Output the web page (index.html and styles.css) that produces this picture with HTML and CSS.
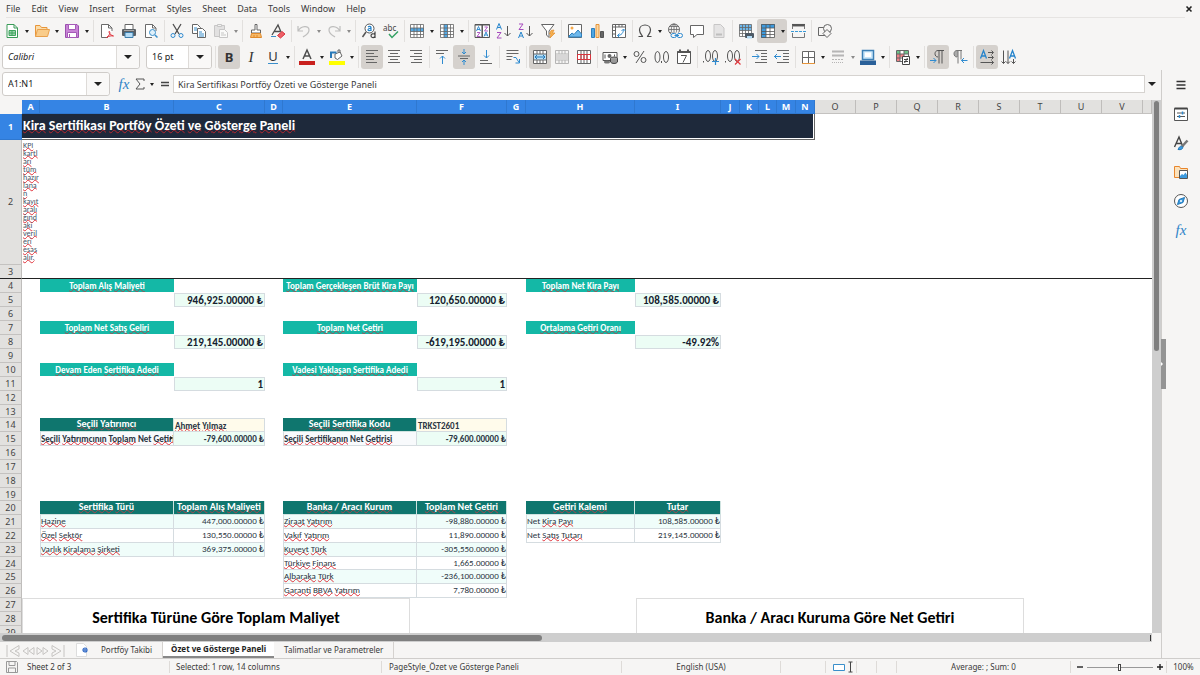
FILE: index.html
```html
<!DOCTYPE html>
<html lang="tr">
<head>
<meta charset="utf-8">
<title>Kira Sertifikası Portföy Özeti</title>
<link rel="stylesheet" href="styles.css">
</head>
<body>
<div class="app">
<header class="menubar">
<nav class="menus" aria-label="Menu"><button>File</button><button>Edit</button><button>View</button><button>Insert</button><button>Format</button><button>Styles</button><button>Sheet</button><button>Data</button><button>Tools</button><button>Window</button><button>Help</button></nav>
<button class="close" aria-label="Close document"><svg viewBox="0 0 8 8"><path d="M1.5 1.5l5 5M6.500 1.500l-5 5" stroke="#222" stroke-width="1.600"/></svg></button>
</header>

<div class="toolbar" role="toolbar" aria-label="Standard">
<button class="tb" aria-label="New"><svg viewBox="0 0 16 16"><path d="M3 1.500h7l3.500 3.500v9.500H3z" fill="#fff" stroke="#3a9b58"/><path d="M10 1.500V5h3.500" stroke="#3a9b58"/><path d="M5 7.500h6.500v5H5zM5 10h6.500M8 7.500v5" fill="#9bd3ac" stroke="#3fa45e"/></svg></button><button class="drop" aria-label="New options"></button>
<button class="tb" aria-label="Open"><svg viewBox="0 0 16 16"><path d="M1.500 13.500V2.500h4.500l1.500 2h5.500v2" fill="#fbdca9" stroke="#e8963a"/><path d="M1.500 13.500l2-7h12l-2 7z" fill="#f9cc8a" stroke="#e8a04c"/></svg></button><button class="drop" aria-label="Open options"></button>
<button class="tb" aria-label="Save"><svg viewBox="0 0 16 16"><path d="M1.500 1.500h11.500l1.500 1.500v11.500h-13z" fill="#c884d6" stroke="#9a4fae"/><path d="M4.500 1.500h7v5h-7zM3.500 9.500h9v5h-9z" fill="#fff" stroke="#a65bb8"/><path d="M5.500 11v3.500" stroke="#a65bb8"/></svg></button><button class="drop" aria-label="Save options"></button>
<i class="sep wide"></i>
<button class="tb" aria-label="Export as PDF"><svg viewBox="0 0 16 16"><path d="M9 14.500H2.500v-13h7l3.500 3.500v3" fill="#fff" stroke="#6b6b6b"/><path d="M9.500 1.500V5H13" stroke="#6b6b6b"/><path d="M7.500 14.500c3-2 4-5 3-6s-1 3 4 4.500c-2-.5-5 0-7 1.500z" stroke="#e0323c"/></svg></button>
<button class="tb" aria-label="Print"><svg viewBox="0 0 16 16"><path d="M4 6V1.500h8V6" fill="#fff" stroke="#666"/><rect x="1" y="6" width="14" height="7" rx="1" fill="#5b6065"/><path d="M4 9.500h8v5H4z" fill="#b5dcf6" stroke="#3d7eac"/><path d="M3 7.500h10" stroke="#aaa"/></svg></button>
<button class="tb" aria-label="Print preview"><svg viewBox="0 0 16 16"><path d="M9 14.500H2.500v-13h7l3.500 3.500v3" fill="#fff" stroke="#6b6b6b"/><path d="M9.500 1.500V5H13" stroke="#6b6b6b"/><circle cx="9.500" cy="9.500" r="3" fill="#dff0fa" stroke="#3a8fcb"/><path d="M12 12l2.500 2.500" stroke="#3a8fcb" stroke-width="1.500"/></svg></button>
<i class="sep"></i>
<button class="tb" aria-label="Cut"><svg viewBox="0 0 16 16"><path d="M4 1l6 10M12 1L6 11" stroke="#4f4f4f" stroke-width="1.300"/><circle cx="4" cy="12.500" r="2" stroke="#2f8bd0"/><circle cx="12" cy="12.500" r="2" stroke="#2f8bd0"/></svg></button>
<button class="tb" aria-label="Copy"><svg viewBox="0 0 16 16"><path d="M1.500 1.500h5l3 3v6h-8z" fill="#fff" stroke="#666"/><path d="M6.500 5.500h5l3 3v6h-8z" fill="#fff" stroke="#666"/><path d="M3 5h3M3 7h3M8 9h3M8 11h5M8 13h5" stroke="#3a8fcb"/></svg></button>
<button class="tb dim" aria-label="Paste"><svg viewBox="0 0 16 16"><path d="M1.500 2.500h10v11h-10z" fill="#cfcfcf" stroke="#999"/><path d="M4.500 1.500h4v2h-4z" fill="#eee" stroke="#999"/><path d="M6.500 6.500h5l3 3v5h-8z" fill="#fff" stroke="#999"/><path d="M8 10h3M8 12h5" stroke="#999"/></svg></button><button class="drop dim" aria-label="Paste options"></button>
<i class="sep wide"></i>
<button class="tb" aria-label="Clone formatting"><svg viewBox="0 0 16 16"><path d="M7 1.500h2V7h3.500v3h-9V7H7z" fill="#fff" stroke="#666"/><path d="M3.500 10.500h9l1 4h-11z" fill="#f7b968" stroke="#e08a2c"/><path d="M6 12v2M9 12v2" stroke="#e08a2c"/></svg></button>
<button class="tb" aria-label="Clear formatting"><svg viewBox="0 0 16 16"><path d="M2 12L8 2l3 7M4.500 8.500H10" stroke="#4d4d4d" stroke-width="1.300"/><path d="M1 13.500h5" stroke="#3a8fcb"/><path d="M7.500 12.500l4.500-4 3 2.500-4.500 4z" fill="#ef6168" stroke="#d9343f"/></svg></button>
<i class="sep"></i>
<button class="tb dim" aria-label="Undo"><svg viewBox="0 0 16 16"><path d="M2 3v5h5M2.500 7.500C5 3 13 2 13 7c0 4-3 5-6 7" stroke="#888" stroke-width="1.200"/></svg></button><button class="drop dim" aria-label="Undo list"></button>
<button class="tb dim" aria-label="Redo"><svg viewBox="0 0 16 16"><path d="M14 3v5H9M13.500 7.500C11 3 3 2 3 7c0 4 3 5 6 7" stroke="#888" stroke-width="1.200"/></svg></button><button class="drop dim" aria-label="Redo list"></button>
<i class="sep wide"></i>
<button class="tb" aria-label="Find and replace"><svg viewBox="0 0 16 16"><circle cx="8.500" cy="5.500" r="4.500" fill="#fff" stroke="#555"/><path d="M5 9l-3.500 5" stroke="#555" stroke-width="1.500"/><path d="M7 4c1-1 3-.8 3 .5V8M10 5.500C8 5.300 7 5.800 7 6.700s1.500 1.500 3 .3" stroke="#2584cc" stroke-width="1.200"/><path d="M14 8.500V15M14 11.500c-2-1.500-4-.5-4 1.300s2.500 2.500 4 .7" stroke="#444" stroke-width="1.200"/></svg></button>
<button class="tb" aria-label="Spelling"><svg viewBox="0 0 16 16"><text x="0" y="8" font-size="8" fill="#444">abc</text><path d="M6 11l3 3.500L15 8.500" stroke="#35a265" stroke-width="1.500"/></svg></button>
<i class="sep"></i>
<button class="tb" aria-label="Row"><svg viewBox="0 0 16 16"><path d="M1.500 1.500h13v13h-13z" fill="#fff"/><path d="M1 5h14v3.500H1z" fill="#54a9e4"/><path d="M1.500 1.500h13v13h-13zM1.500 5h13M1.500 8.500h13M1.500 11.500h13M5 1.500v13M8 1.500v13M11.500 1.500v13" stroke="#666" stroke-width=".8"/></svg></button><button class="drop" aria-label="Row options"></button>
<button class="tb" aria-label="Column"><svg viewBox="0 0 16 16"><path d="M1.500 1.500h13v13h-13z" fill="#fff"/><path d="M5 1h3.500v14H5z" fill="#54a9e4"/><path d="M1.500 1.500h13v13h-13zM1.500 5h13M1.500 8.500h13M1.500 11.500h13M5 1.500v13M8.500 1.500v13M11.500 1.500v13" stroke="#666" stroke-width=".8"/></svg></button><button class="drop" aria-label="Column options"></button>
<i class="sep wide"></i>
<button class="tb" aria-label="Sort"><svg viewBox="0 0 16 16"><path d="M1 1.500h14.500v13H1z" fill="#fff" stroke="#555"/><path d="M1 1.800h14.500M8.200 1v13.500" stroke="#555" stroke-width="1.500"/><path d="M2.500 8l2-4.500 2 4.500M3 6.500h3M10 13.500L12 9l2 4.500M10.500 12h3" stroke="#2584cc" stroke-width=".9"/><path d="M3 9.500h3l-3 4h3.500M10.500 4h3l-3 4H14" stroke="#a64bbd" stroke-width=".9"/></svg></button>
<button class="tb" aria-label="Sort ascending"><svg viewBox="0 0 16 16"><path d="M.5 6.500L3 .5l2.500 6M1.500 4.500h3" stroke="#2584cc"/><path d="M1 9.500h4l-4 5.500h4.500" stroke="#a64bbd"/><path d="M11.500 3v10M8.500 10l3 3 3-3" stroke="#555"/></svg></button>
<button class="tb" aria-label="Sort descending"><svg viewBox="0 0 16 16"><path d="M1 1h4L1 6.500h4.500" stroke="#a64bbd"/><path d="M.5 15L3 9l2.500 6M1.500 13h3" stroke="#2584cc"/><path d="M11.500 3v10M8.500 10l3 3 3-3" stroke="#555"/></svg></button>
<button class="tb" aria-label="AutoFilter"><svg viewBox="0 0 16 16"><path d="M1.500 1.500h12.500L9 8v6.500L6.500 12V8z" fill="#fff" stroke="#666"/><path d="M11 7.500l3-.5-1.500 3H15l-5 5 1-4H9.500z" fill="#f6b04f" stroke="#e28c2b" stroke-width=".7"/></svg></button>
<i class="sep wide"></i>
<button class="tb" aria-label="Image"><svg viewBox="0 0 16 16"><path d="M1.500 1.500h13v13h-13z" fill="#fff" stroke="#666"/><circle cx="5" cy="5" r="1.500" fill="#f6a94b"/><path d="M2 13l3-3 2 1.500L11 7l3.500 4v3H2z" fill="#6db8ec" stroke="#2d80bf"/></svg></button>
<button class="tb" aria-label="Chart"><svg viewBox="0 0 16 16"><path d="M2.500 5.500h3v9h-3z" fill="#4fa6e2" stroke="#2d80bf"/><path d="M7 1.500h3v13H7z" fill="#fbd7a2" stroke="#e6953b"/><path d="M11.500 8.500h3v6h-3z" fill="#666" stroke="#555"/></svg></button>
<button class="tb" aria-label="Pivot table"><svg viewBox="0 0 16 16"><path d="M1.500 1.500h13v13h-13z" fill="#fff" stroke="#666"/><path d="M1.500 4h13M4.500 1.500v13M8 1.500V4M11 1.500V4M1.500 7.500h3M1.500 11h3" stroke="#666"/><path d="M6.500 12.500c4 0 6-3 6-6M10.500 8l2-2 2 2M8.500 10.500l-2 2 2 2" stroke="#2f8bd0"/></svg></button>
<i class="sep"></i>
<button class="tb" aria-label="Special character"><svg viewBox="0 0 16 16"><path d="M1.500 13.500h4c0-1-3-3-3-6.500C2.500 4 5 2 8 2s5.500 2 5.500 5c0 3.500-3 5.500-3 6.500h4" stroke="#4d4d4d" stroke-width="1.200"/></svg></button><button class="drop" aria-label="Recent characters"></button>
<button class="tb" aria-label="Hyperlink"><svg viewBox="0 0 16 16"><circle cx="7" cy="6.500" r="5.500" stroke="#666"/><path d="M1.500 6.500h11M7 1v10M2.500 3.500h9M2.500 9.500h6" stroke="#666" stroke-width=".8"/><ellipse cx="7" cy="6.500" rx="2.700" ry="5.500" stroke="#666" stroke-width=".8"/><path d="M4 9.500h12V16H4z" fill="#f6f5f4"/><rect x="4" y="10.500" width="5.500" height="4" rx="2" stroke="#2f8bd0"/><rect x="10" y="10.500" width="5.500" height="4" rx="2" stroke="#2f8bd0"/><path d="M7.500 12.500h4.500" stroke="#2f8bd0"/></svg></button>
<button class="tb" aria-label="Comment"><svg viewBox="0 0 16 16"><path d="M1.500 2.500h13v9H8l-3.500 3v-3h-3z" fill="#fff" stroke="#666"/></svg></button>
<button class="tb dim" aria-label="Headers and footers"><svg viewBox="0 0 16 16"><path d="M3 1.500h6.500l3.500 3.500v9.500H3z" fill="#d5d5d5" stroke="#999"/><path d="M5 11.500h6" stroke="#888" stroke-width="2"/></svg></button>
<i class="sep wide"></i>
<button class="tb" aria-label="Print area"><svg viewBox="0 0 16 16"><path d="M1.500 1.500h12v13h-12z" fill="#fff"/><path d="M1.500 1.500h12v6h-12z" fill="#6db8ec"/><path d="M1.500 1.500h12v12h-12zM1.500 4.500h12M1.500 7.500h12M1.500 10.500h12M4.500 1.500v12M7.500 1.500v12M10.500 1.500v12" stroke="#666" stroke-width=".8"/><rect x="7" y="10" width="9" height="5" rx="1" fill="#4d5a66"/><path d="M9 13h5v2.500H9z" fill="#b5dcf6"/></svg></button>
<span class="pair on"><button class="tb" aria-label="Freeze rows and columns"><svg viewBox="0 0 16 16"><path d="M1.500 1.500h13v13h-13z" fill="#fff"/><path d="M1 1h5v14H1zM1 1h14v4H1z" fill="#3d9ade"/><path d="M1.500 1.500h13v13h-13zM1.500 5h13M1.500 8.500h13M1.500 11.500h13M6 1.500v13M10 1.500v13" stroke="#555" stroke-width=".8"/></svg></button><button class="drop" aria-label="Freeze options"></button></span>
<button class="tb" aria-label="Split window"><svg viewBox="0 0 16 16"><path d="M2 2.200h13" stroke="#555" stroke-width="2.500"/><path d="M2.500 6V2.500M14.500 6V2.500M2.500 10v4.500h12V10" stroke="#777"/><path d="M1 8.500h3M5 8.500h3M9 8.500h3M13 8.500h3" stroke="#3a9bd8"/></svg></button>
<i class="sep wide"></i>
<button class="tb" aria-label="Show draw functions"><svg viewBox="0 0 16 16"><path d="M1.500 4.500h7v8h-7z" fill="#f6f5f4" stroke="#666"/><circle cx="10.500" cy="5.500" r="4" fill="#f6f5f4" stroke="#666"/><path d="M10 6.500l4 4-4 4-4-4z" fill="#f6f5f4" stroke="#666"/></svg></button>
</div>

<div class="toolbar" role="toolbar" aria-label="Formatting">
<span class="combo font-name"><input type="text" value="Calibri" aria-label="Font name"><button aria-label="Font list"></button></span>
<span class="combo font-size"><input type="text" value="16 pt" aria-label="Font size"><button aria-label="Size list"></button></span>
<i class="sep wide"></i>
<button class="tb on bold" aria-label="Bold">B</button>
<button class="tb ital" aria-label="Italic">I</button>
<button class="tb under" aria-label="Underline"><span>U</span></button><button class="drop" aria-label="Underline options"></button>
<i class="sep"></i>
<button class="tb" aria-label="Font color"><svg viewBox="0 0 16 16"><path d="M4 10L8 1l4 9M5.500 7h5" stroke="#4d4d4d" stroke-width="1.500"/><path d="M0 12h16v4H0z" fill="#c9211e"/></svg></button><button class="drop" aria-label="Font color options"></button>
<button class="tb" aria-label="Highlighting"><svg viewBox="0 0 16 16"><path d="M6 5l5-2 2 4-4.500 3.500L6 9z" fill="#fff" stroke="#666"/><path d="M9 3V1h2v3" stroke="#666"/><path d="M2 9V3.500h5.500" stroke="#2a7ab9" stroke-width="2"/><path d="M0 12h16v4H0z" fill="#ff0"/></svg></button><button class="drop" aria-label="Highlighting options"></button>
<i class="sep wide"></i>
<button class="tb on" aria-label="Align left"><svg viewBox="0 0 16 16"><path d="M2 1.500h12M2 4.500h8M2 7.500h12M2 10.500h8M2 13.500h11" stroke="#666"/></svg></button>
<button class="tb" aria-label="Align center"><svg viewBox="0 0 16 16"><path d="M2 1.500h12M4 4.500h8M2 7.500h12M4 10.500h8M2 13.500h12" stroke="#666"/></svg></button>
<button class="tb" aria-label="Align right"><svg viewBox="0 0 16 16"><path d="M2 1.500h12M6 4.500h8M2 7.500h12M6 10.500h8M3 13.500h11" stroke="#666"/></svg></button>
<i class="sep"></i>
<button class="tb" aria-label="Align top"><svg viewBox="0 0 16 16"><path d="M2 1.500h12M2 4.500h8" stroke="#666"/><path d="M8.500 15V7M6 9.500L8.500 7l2.500 2.500" stroke="#2f8bd0"/></svg></button>
<button class="tb on" aria-label="Center vertically"><svg viewBox="0 0 16 16"><path d="M2 7h12M4 9.500h8" stroke="#666"/><path d="M8 0v5M6 3l2 2 2-2M8 16v-5M6 13l2-2 2 2" stroke="#2f8bd0"/></svg></button>
<button class="tb" aria-label="Align bottom"><svg viewBox="0 0 16 16"><path d="M2 11.500h8M2 14.500h12" stroke="#666"/><path d="M8.500 1v8M6 6.500L8.500 9 11 6.500" stroke="#2f8bd0"/></svg></button>
<i class="sep wide"></i>
<button class="tb" aria-label="Wrap text"><svg viewBox="0 0 16 16"><path d="M1.500 1.500h12M1.500 4.500h12M1.500 7.500h6M1.500 10.500h5" stroke="#666"/><path d="M8.500 8.500h2.500l3 5M14.500 10v4h-4" stroke="#2f8bd0"/></svg></button>
<i class="sep wide"></i>
<button class="tb on" aria-label="Merge and center"><svg viewBox="0 0 16 16"><path d="M1.500 1.500h13v13h-13z" fill="#fff"/><path d="M1 5h14v6H1z" fill="#b8e0f8"/><path d="M1.500 1.500h13v13h-13zM1.500 5h13M1.500 11h13M5 1.500V5M8 1.500V5M11 1.500V5M5 11v3.500M8 11v3.500M11 11v3.500" stroke="#666"/><path d="M3 8h10M5 6L3 8l2 2M11 6l2 2-2 2" stroke="#2178b9"/></svg></button>
<button class="tb dim" aria-label="Merge cells"><svg viewBox="0 0 16 16"><path d="M1.500 1.500h13v13h-13zM1.500 5h13M1.500 11h13M5 1.500V5M8 1.500V5M11 1.500V5M5 11v3.500M8 11v3.500M11 11v3.500" stroke="#777"/><path d="M2 5.500h12v5H2z" fill="#bbb"/></svg></button>
<button class="tb" aria-label="Unmerge cells"><svg viewBox="0 0 16 16"><path d="M1.500 1.500h13v13h-13z" fill="#fff"/><path d="M1.500 1.500h13v13h-13zM5 1.500v13M8 1.500v13M11 1.500v13" stroke="#666"/><path d="M1.500 5.500h13v5h-13zM5 5.500v5M8 5.500v5M11 5.500v5" stroke="#d8343c"/></svg></button>
<i class="sep"></i>
<button class="tb" aria-label="Currency"><svg viewBox="0 0 16 16"><path d="M1 3.500h14v8H1z" fill="#fff" stroke="#555"/><circle cx="7.500" cy="7" r="2" fill="#666"/><path d="M3 5.500v4M12.500 5.500v2" stroke="#555"/><ellipse cx="12" cy="9.500" rx="3.500" ry="1.500" fill="#aaa" stroke="#444"/><path d="M8.500 9.500V13c1 2 6 2 7 0V9.500" fill="#999" stroke="#444"/><ellipse cx="5" cy="13" rx="3" ry="1.500" fill="#777"/></svg></button><button class="drop" aria-label="Currency options"></button>
<button class="tb" aria-label="Percent"><svg viewBox="0 0 16 16"><circle cx="4.500" cy="5" r="2.500" stroke="#555"/><circle cx="11.500" cy="11" r="2.500" stroke="#555"/><path d="M12 2L4 14" stroke="#555"/></svg></button>
<button class="tb" aria-label="Number"><svg viewBox="0 0 16 16"><ellipse cx="3.500" cy="8" rx="2.500" ry="5.500" stroke="#555"/><ellipse cx="12" cy="8" rx="2.500" ry="5.500" stroke="#555"/><path d="M7.500 12v2" stroke="#555"/></svg></button>
<button class="tb" aria-label="Date"><svg viewBox="0 0 16 16"><path d="M1.500 2.500h13v12h-13z" fill="#fff" stroke="#555"/><path d="M1.500 3h13M4 .5v3M12 .5v3" stroke="#555" stroke-width="2"/><path d="M5 6.500h5.500l-3.500 7" stroke="#555"/></svg></button>
<i class="sep wide"></i>
<button class="tb" aria-label="Add decimal place"><svg viewBox="0 0 16 16"><path d="M.5 12v1.500" stroke="#555"/><ellipse cx="5" cy="7" rx="2.500" ry="5.500" stroke="#555"/><ellipse cx="12" cy="7" rx="2.500" ry="5.500" stroke="#555"/><path d="M9 12.500h7M12.500 9v7" stroke="#2f8bd0" stroke-width="1.200"/></svg></button>
<button class="tb" aria-label="Delete decimal place"><svg viewBox="0 0 16 16"><path d="M.5 12v1.500" stroke="#555"/><ellipse cx="5" cy="7" rx="2.500" ry="5.500" stroke="#555"/><ellipse cx="12" cy="7" rx="2.500" ry="5.500" stroke="#555"/><path d="M10 10l5.500 5.500M15.500 10L10 15.500" stroke="#e0393f" stroke-width="1.200"/></svg></button>
<i class="sep wide"></i>
<button class="tb" aria-label="Increase indent"><svg viewBox="0 0 16 16"><path d="M3 1.500h12M9 4.500h6M9 7.500h6M9 10.500h6M3 13.500h12" stroke="#666"/><path d="M0 7.500h7M4.500 5L7 7.500 4.500 10" stroke="#2f8bd0"/></svg></button>
<button class="tb" aria-label="Decrease indent"><svg viewBox="0 0 16 16"><path d="M3 1.500h12M9 4.500h6M9 7.500h6M9 10.500h6M3 13.500h12" stroke="#666"/><path d="M0 7.500h7M3 5L.5 7.500 3 10" stroke="#2f8bd0"/></svg></button>
<i class="sep"></i>
<button class="tb" aria-label="Borders"><svg viewBox="0 0 16 16"><path d="M2.500 2.500h12v12h-12z" fill="#fff"/><path d="M2.500 14.500v-12h12v12M8.500 2.500v12M2.500 8.500h12" stroke="#666"/><path d="M2 14.500h13" stroke="#e6953b"/></svg></button><button class="drop" aria-label="Border options"></button>
<button class="tb dim" aria-label="Border style"><svg viewBox="0 0 16 16"><path d="M2 2.500h12M2 6.500h12" stroke="#777" stroke-width="2"/><path d="M2 10.500h12" stroke="#777" stroke-dasharray="2 1"/><path d="M2 13.500h12" stroke="#777" stroke-dasharray="1 1"/></svg></button><button class="drop dim" aria-label="Border style options"></button>
<button class="tb" aria-label="Border color"><svg viewBox="0 0 16 16"><path d="M2.500 1.500h11v9h-11z" fill="#c9e6fa" stroke="#3c7fb5" stroke-width="1.500"/><path d="M5 3.500h6v4.500H5z" fill="#fff"/><path d="M0 11.500h16V16H0z" fill="#2a6099"/></svg></button><button class="drop" aria-label="Border color options"></button>
<i class="sep wide"></i>
<button class="tb" aria-label="Conditional formatting"><svg viewBox="0 0 16 16"><path d="M1.500 1.500h12v11h-12z" fill="#fff"/><path d="M2 2h3v3H2zM9 2h4v3H9z" fill="#6cc48a"/><path d="M2 5h3v8H2zM5 5h4v3H5z" fill="#ef8087"/><path d="M1.500 1.500h12v11h-12zM1.500 5h12M1.500 9h12M5 1.500v11M9 1.500v11" stroke="#666"/><path d="M7.500 7.500h7v8h-7z" fill="#fff" stroke="#444"/><path d="M9 10.500h4M9 12.500h4M12.500 9l-3 5" stroke="#444"/></svg></button><button class="drop" aria-label="Conditional options"></button>
<i class="sep wide"></i>
<button class="tb on" aria-label="Left to right"><svg viewBox="0 0 16 16"><path d="M14 1.500H8C4 1.500 4 8 8 8M9 1.500v13M12 1.500v13" stroke="#555"/><path d="M0 11.500h6M3.500 9L6 11.500 3.500 14" stroke="#2f8bd0"/></svg></button>
<button class="tb" aria-label="Right to left"><svg viewBox="0 0 16 16"><path d="M9 1.500H5C1 1.500 1 8 5 8h1V2z" fill="#aaa"/><path d="M10 1.500H5C1 1.500 1 8 5 8M6 1.500v13M9 1.500v9" stroke="#777"/><path d="M9.500 11.500h6M12 9l-2.500 2.500L12 14" stroke="#2f8bd0"/></svg></button>
<i class="sep wide"></i>
<button class="tb on" aria-label="Text left to right"><svg viewBox="0 0 16 16"><path d="M1.500 9.500L4.500 1.500l3 8M2.500 7h4" stroke="#2584cc" stroke-width="1.300"/><path d="M9 3.500h5M12.500 1.500l2 2-2 2M9 8.500h5M12.500 6.500l2 2-2 2M1.500 13.500h13M12.500 11.500l2 2-2 2" stroke="#555"/></svg></button>
<button class="tb" aria-label="Text top to bottom"><svg viewBox="0 0 16 16"><path d="M8.500 9.500L11.500 1.500l3 8M9.500 7h4" stroke="#2584cc" stroke-width="1.300"/><path d="M2.500 1.500v13M.5 12.500l2 2 2-2M7 1.500v13M5 12.500l2 2 2-2M12.500 10v4.500M10.500 12.500l2 2 2-2" stroke="#555"/></svg></button>
</div>

<main class="work">
<div class="doc">
<div class="formula-bar">
<span class="combo name-box"><input type="text" value="A1:N1" aria-label="Name box"><button aria-label="Name list"></button></span>
<button class="fb fx" aria-label="Function wizard">fx</button>
<button class="fb" aria-label="Select function"><svg viewBox="0 0 10 14"><path d="M9 4V2H1l4 5-4 5h8v-2" stroke="#555"/></svg></button><button class="drop" aria-label="Function list"></button>
<button class="fb eq" aria-label="Formula"><svg viewBox="0 0 10 14"><path d="M1 5.500h8M1 8.500h8" stroke="#444" stroke-width="1.400"/></svg></button>
<input class="formula" type="text" value="Kira Sertifikası Portföy Özeti ve Gösterge Paneli" aria-label="Input line">
<button class="drop expand" aria-label="Expand formula bar"></button>
</div>

<div class="grid-row">
<div class="sheet">
<table>
<colgroup><col class="w-head"><col class="w-s"><col class="w-l"><col class="w-m"><col class="w-s"><col class="w-l"><col class="w-f"><col class="w-g"><col class="w-h"><col class="w-i"><col class="w-g"><col class="w-g"><col class="w-s"><col class="w-g"><col class="w-g"><col class="w-x"><col class="w-x"><col class="w-x"><col class="w-x"><col class="w-x"><col class="w-x"><col class="w-x"><col class="w-x"><col></colgroup>
<thead><tr><td class="corner"></td><th class="sel">A</th><th class="sel">B</th><th class="sel">C</th><th class="sel">D</th><th class="sel">E</th><th class="sel">F</th><th class="sel">G</th><th class="sel">H</th><th class="sel">I</th><th class="sel">J</th><th class="sel">K</th><th class="sel">L</th><th class="sel">M</th><th class="sel">N</th><th>O</th><th>P</th><th>Q</th><th>R</th><th>S</th><th>T</th><th>U</th><th>V</th><th></th></tr></thead>
<tbody>
<tr class="r-title"><th class="sel">1</th><td colspan="14" class="title"><div><s>Kira</s> <s>Sertifikası</s> <s>Portföy</s> <s>Özeti</s> <s>ve</s> <s>Gösterge</s> <s>Paneli</s></div></td><td colspan="9"></td></tr>
<tr class="r-note"><th>2</th><td class="note"><s>KPI</s><br><s>kartl</s><br><s>arı</s><br><s>tüm</s><br><s>hazır</s><br><s>lana</s><br><s>n</s><br><s>kayıt</s><br><s>aralı</s><br><s>ğınd</s><br><s>aki</s><br><s>veril</s><br><s>eri</s><br><s>esas</s><br><s>alır.</s></td><td colspan="22"></td></tr>
<tr class="freeze"><th>3</th><td colspan="23"></td></tr>
<tr><th>4</th><td></td><td class="kpi"><s>Toplam</s> <s>Alış</s> <s>Maliyeti</s></td><td></td><td></td><td class="kpi"><s>Toplam</s> <s>Gerçekleşen</s> <s>Brüt</s> <s>Kira</s> <s>Payı</s></td><td></td><td></td><td class="kpi"><s>Toplam</s> Net <s>Kira</s> <s>Payı</s></td><td></td><td colspan="14"></td></tr>
<tr><th>5</th><td></td><td></td><td class="val">946,925.00000 ₺</td><td></td><td></td><td class="val">120,650.00000 ₺</td><td></td><td></td><td class="val">108,585.00000 ₺</td><td colspan="14"></td></tr>
<tr><th>6</th><td colspan="23"></td></tr>
<tr><th>7</th><td></td><td class="kpi"><s>Toplam</s> Net <s>Satış</s> <s>Geliri</s></td><td></td><td></td><td class="kpi"><s>Toplam</s> Net <s>Getiri</s></td><td></td><td></td><td class="kpi"><s>Ortalama</s> <s>Getiri</s> <s>Oranı</s></td><td></td><td colspan="14"></td></tr>
<tr><th>8</th><td></td><td></td><td class="val">219,145.00000 ₺</td><td></td><td></td><td class="val">-619,195.00000 ₺</td><td></td><td></td><td class="val">-49.92%</td><td colspan="14"></td></tr>
<tr><th>9</th><td colspan="23"></td></tr>
<tr><th>10</th><td></td><td class="kpi"><s>Devam</s> Eden <s>Sertifika</s> <s>Adedi</s></td><td></td><td></td><td class="kpi"><s>Vadesi</s> <s>Yaklaşan</s> <s>Sertifika</s> <s>Adedi</s></td><td></td><td colspan="17"></td></tr>
<tr><th>11</th><td></td><td></td><td class="val">1</td><td></td><td></td><td class="val">1</td><td colspan="17"></td></tr>
<tr><th>12</th><td colspan="23"></td></tr>
<tr class="short"><th>13</th><td colspan="23"></td></tr>
<tr><th>14</th><td></td><td class="hd"><s>Seçili</s> <s>Yatırımcı</s></td><td class="pick"><s>Ahmet</s> <s>Yılmaz</s></td><td></td><td class="hd"><s>Seçili</s> <s>Sertifika</s> <s>Kodu</s></td><td class="pick">TRKST2601</td><td colspan="17"></td></tr>
<tr><th>15</th><td></td><td class="lab cut"><s>Seçili</s> <s>Yatırımcının</s> <s>Toplam</s> Net <s>Getirisi</s></td><td class="sub">-79,600.00000 ₺</td><td></td><td class="lab"><s>Seçili</s> <s>Sertifikanın</s> Net <s>Getirisi</s></td><td class="sub">-79,600.00000 ₺</td><td colspan="17"></td></tr>
<tr><th>16</th><td colspan="23"></td></tr>
<tr><th>17</th><td colspan="23"></td></tr>
<tr><th>18</th><td colspan="23"></td></tr>
<tr class="short"><th>19</th><td colspan="23"></td></tr>
<tr><th>20</th><td></td><td class="hd"><s>Sertifika</s> <s>Türü</s></td><td class="hd"><s>Toplam</s> <s>Alış</s> <s>Maliyeti</s></td><td></td><td class="hd"><s>Banka</s> / <s>Aracı</s> <s>Kurum</s></td><td class="hd"><s>Toplam</s> Net <s>Getiri</s></td><td></td><td class="hd"><s>Getiri</s> <s>Kalemi</s></td><td class="hd"><s>Tutar</s></td><td colspan="14"></td></tr>
<tr><th>21</th><td></td><td class="c alt"><s>Hazine</s></td><td class="n alt">447,000.00000 ₺</td><td></td><td class="c alt"><s>Ziraat</s> <s>Yatırım</s></td><td class="n alt">-98,880.00000 ₺</td><td></td><td class="c alt">Net <s>Kira</s> <s>Payı</s></td><td class="n alt">108,585.00000 ₺</td><td colspan="14"></td></tr>
<tr><th>22</th><td></td><td class="c"><s>Özel</s> <s>Sektör</s></td><td class="n">130,550.00000 ₺</td><td></td><td class="c"><s>Vakıf</s> <s>Yatırım</s></td><td class="n">11,890.00000 ₺</td><td></td><td class="c">Net <s>Satış</s> <s>Tutarı</s></td><td class="n">219,145.00000 ₺</td><td colspan="14"></td></tr>
<tr><th>23</th><td></td><td class="c alt"><s>Varlık</s> <s>Kiralama</s> <s>Şirketi</s></td><td class="n alt">369,375.00000 ₺</td><td></td><td class="c alt"><s>Kuveyt</s> <s>Türk</s></td><td class="n alt">-305,550.00000 ₺</td><td colspan="17"></td></tr>
<tr class="short"><th>24</th><td></td><td></td><td></td><td></td><td class="c"><s>Türkiye</s> <s>Finans</s></td><td class="n">1,665.00000 ₺</td><td colspan="17"></td></tr>
<tr><th>25</th><td></td><td></td><td></td><td></td><td class="c alt"><s>Albaraka</s> <s>Türk</s></td><td class="n alt">-236,100.00000 ₺</td><td colspan="17"></td></tr>
<tr><th>26</th><td></td><td></td><td></td><td></td><td class="c"><s>Garanti</s> <s>BBVA</s> <s>Yatırım</s></td><td class="n">7,780.00000 ₺</td><td colspan="17"></td></tr>
<tr><th>27</th><td colspan="23"></td></tr>
<tr><th>28</th><td colspan="23"></td></tr>
<tr><th>29</th><td colspan="23"></td></tr>
</tbody>
</table>
<div class="chart chart-type">Sertifika Türüne Göre Toplam Maliyet</div>
<div class="chart chart-bank">Banka / Aracı Kuruma Göre Net Getiri</div>
</div>
<div class="vscroll"><div class="vthumb"></div></div>
</div>
<div class="hscroll"><div class="hthumb"></div><i class="grip"></i></div>

<div class="tabs">
<span class="tabnav"><button aria-label="First sheet"><svg viewBox="0 0 14 14"><path d="M1 1v12M13 1.500L4 7l9 5.500V9L9 7l4-2z" stroke="#c6c4c2"/></svg></button><button aria-label="Previous sheet"><svg viewBox="0 0 14 14"><path d="M7 3.500L2 7l5 3.500zM13 3.500L8 7l5 3.500z" stroke="#c6c4c2"/></svg></button><button aria-label="Next sheet"><svg viewBox="0 0 14 14"><path d="M1 3.500L6 7l-5 3.500zM7 3.500L12 7l-5 3.500z" stroke="#c6c4c2"/></svg></button><button aria-label="Last sheet"><svg viewBox="0 0 14 14"><path d="M13 1v12M1 1.500L10 7l-9 5.500V9l4-2-4-2z" stroke="#c6c4c2"/></svg></button></span>
<button class="add" aria-label="Add sheet"><svg viewBox="0 0 16 16"><path d="M1.500 1.500h7l3 3v10h-10z" fill="#fff" stroke="#ddd"/><circle cx="10" cy="8" r="2" fill="#fff" stroke="#2c66c4" stroke-width="1.200"/><path d="M10 6.500v3M8.500 8h3" stroke="#2c66c4"/></svg></button>
<button class="tab">Portföy Takibi</button><button class="tab active">Özet ve Gösterge Paneli</button><button class="tab">Talimatlar ve Parametreler</button>
</div>
</div>

<aside class="sidebar">
<button class="handle" aria-label="Hide sidebar"></button>
<button aria-label="Sidebar settings"><svg viewBox="0 0 16 16"><path d="M3.500 4.500h9M3.500 8h9M3.500 11.500h9" stroke="#333" stroke-width="1.400"/></svg></button>
<button aria-label="Properties"><svg viewBox="0 0 16 16"><path d="M1.500 2.500h13v12h-13z" fill="#fff" stroke="#555"/><path d="M1.500 2.500h13" stroke="#444" stroke-width="2"/><path d="M4 7h8M4 10.500h8" stroke="#555"/><path d="M9.500 5.500V8.500M6.500 9v3" stroke="#2f8bd0" stroke-width="1.500"/></svg></button>
<button aria-label="Styles"><svg viewBox="0 0 16 16"><path d="M1.500 12L6 2l4 10M3 8.500h5.500" stroke="#444" stroke-width="1.400"/><path d="M14.500 5.500L9 11.500" stroke="#777" stroke-width="2.500"/><path d="M5 14.500c1-2 2-4 4-3s0 4-4 3z" fill="#3d9ade" stroke="#2178b9"/></svg></button>
<button aria-label="Gallery"><svg viewBox="0 0 16 16"><path d="M1.500 13.500v-11h5l1 2h7v9z" fill="#fbe2bd" stroke="#e8862c"/><path d="M6.500 6.500h8v8h-8z" fill="#fff" stroke="#555"/><path d="M7 14v-2l2-2 1.500 1 2-2.500L14 11v3z" fill="#3d9ade"/></svg></button>
<button aria-label="Navigator"><svg viewBox="0 0 16 16"><circle cx="8" cy="8" r="6.500" fill="#fff" stroke="#555"/><path d="M11.500 4.500L10 9.500l-5.500 2L6 6.500z" fill="#3d9ade" stroke="#2178b9"/><circle cx="8" cy="8" r="1" fill="#fff"/></svg></button>
<button class="fx" aria-label="Functions">fx</button>
</aside>
</main>

<footer class="status">
<span class="s-save"><svg viewBox="0 0 12 12"><path d="M.5.5h10l1 1v10H.5zM3 .5h6v4H3zM2.500 7h7v4.500h-7z" stroke="#999"/></svg></span>
<span class="s-sheet">Sheet 2 of 3</span>
<span class="s-sel">Selected: 1 row, 14 columns</span>
<span class="s-style">PageStyle_Özet ve Gösterge Paneli</span>
<span class="s-lang">English (USA)</span>
<span class="s-fill"></span>
<span class="s-mode"><svg viewBox="0 0 20 12"><path d="M.5 3.500h11v6H.5z" fill="#fff" stroke="#3a8fcb"/><path d="M17.500 1v10M15.500 1h4M15.500 11h4" stroke="#444"/></svg></span>
<span class="s-blank"></span><span class="s-blank"></span>
<span class="s-avg">Average: ; Sum: 0</span>
<span class="s-zoom"><button aria-label="Zoom out"><svg viewBox="0 0 8 8"><path d="M1 4h6" stroke="#222" stroke-width="1.400"/></svg></button><input type="range" min="0" max="100" value="49" aria-label="Zoom"><button aria-label="Zoom in"><svg viewBox="0 0 8 8"><path d="M1 4h6M4 1v6" stroke="#222" stroke-width="1.400"/></svg></button></span>
<span class="s-pct">100%</span>
</footer>
</div>
</body>
</html>
```
FILE: styles.css
```css
* { box-sizing: border-box; }
body { margin: 0; background: #f6f5f4; color: #3a3a3a; font: 8px/12px "Noto Sans", sans-serif; }
button, input { font: inherit; color: inherit; margin: 0; padding: 0; border: 0; background: none; min-width: 0; }
svg { display: block; fill: none; overflow: visible; }
.app { display: flex; flex-direction: column; height: 100vh; overflow: hidden; }

.menubar { display: flex; justify-content: space-between; height: 18px; padding: 0 7px 0 6px; font-size: 9px; }
.menus { display: flex; flex: 1; gap: 11px; border-bottom: 1px solid #e6e4e2; }
.close svg { width: 8px; height: 8px; }

.toolbar { display: flex; align-items: center; height: 26px; flex: none; padding-left: 1px; }
.tb { display: flex; flex: none; align-items: center; justify-content: center; width: 22px; height: 24px; border-radius: 3px; }
.tb svg { width: 16px; height: 16px; font-family: "Noto Sans", sans-serif; }
.on { background: #d5d1cd; border-radius: 3px; }
.dim { opacity: .5; }
.pair { display: flex; }
.drop { flex: none; width: 8px; height: 24px; display: flex; align-items: center; justify-content: center; }
.drop::before, .combo button::before { content: ""; border: 2px solid transparent; border-top: 3px solid #222; border-bottom: 0; }
.sep { flex: none; width: 4px; height: 22px; background: linear-gradient(#e2e0de, #e2e0de) center / 1px 100% no-repeat; }
.sep.wide { width: 5px; }
.bold, .ital, .under { font-size: 13px; color: #333; }
.bold { font-weight: bold; }
.ital { font-family: "Liberation Serif", serif; font-style: italic; font-size: 15px; }
.under span { line-height: 13px; border-bottom: 1px solid #3a8fcb; }

.combo { display: flex; flex: none; height: 24px; background: #fff; border: 1px solid #cfccc9; border-radius: 3px; font-size: 9px; color: #222; }
.combo input { flex: 1; padding-left: 5px; }
.combo button { display: flex; align-items: center; justify-content: center; width: 23px; border-left: 1px solid #dedbd8; background: #f9f8f7; border-radius: 0 3px 3px 0; }
.combo button::before, .expand::before { border-width: 4px 4px 0; }
.font-name { width: 138px; margin: 0 6px 0 1px; }
.font-name input { font-style: italic; }
.font-size { width: 66px; margin-right: 1px; }

.work { display: flex; flex: 1; min-height: 0; }
.doc { display: flex; flex-direction: column; flex: 1; min-width: 0; border-right: 1px solid #cfcdcb; }
.formula-bar { display: flex; align-items: center; flex: none; height: 30px; padding: 0 5px 2px 2px; }
.name-box { width: 108px; margin-right: 6px; }
.fb { flex: none; width: 16px; height: 20px; display: flex; align-items: center; justify-content: center; }
.fb svg { width: 10px; height: 14px; }
.eq { margin-left: 1px; }
.fx { font: italic 15px/16px "Liberation Serif", serif; color: #2f84c8; }
.formula { flex: 1; height: 18px; margin-right: 3px; padding-left: 4px; background: #fff; border: 1px solid #d6d3d0; font-size: 9px; }

.grid-row { display: flex; flex: 1; min-height: 0; }
.sheet { position: relative; flex: 1; min-width: 0; overflow: hidden; background: #fff; }
table { width: 100%; table-layout: fixed; border-spacing: 0; font-family: Carlito, Lato, sans-serif; font-size: 9px; color: #2b3542; }
.w-head { width: 22px; } .w-s { width: 18px; } .w-g { width: 19px; } .w-l { width: 134px; } .w-m { width: 91px; }
.w-f { width: 90px; } .w-h { width: 109px; } .w-i { width: 86px; } .w-x { width: 41px; }
td, th { height: 14px; padding: 0; line-height: 12px; white-space: nowrap; overflow: hidden; }
th { font-family: "Noto Sans", sans-serif; font-weight: normal; color: #444; background: #e2e1df; border-right: 1px solid #bfbdbb; border-bottom: 1px solid #c4c2c0; }
th.sel { background: #3584e4; color: #fff; font-weight: bold; border-color: #2f78d0; }
.corner { background: #f6f5f4; }
.short td, .short th { height: 13px; line-height: 11px; }
.r-title > * { height: 26px; }
.title { background: #666; padding: 0 1px 1px 0; color: #fff; font-size: 14px; font-weight: bold; }
.title div { height: 25px; line-height: 24px; padding-left: 1px; background: #1e293b; border: solid #fff; border-width: 0 1px 1px 0; }
.r-note > * { height: 125px; }
.note { line-height: 8px; padding: 1px 0 0 1px; font-size: 8px; color: #475569; overflow: visible; vertical-align: top; }
.freeze > * { border-bottom: 1px solid #222; height: 14px; }
s { text-decoration: underline wavy #e0343c 1px; text-underline-offset: -1px; text-decoration-skip-ink: none; }
.kpi { background: #14b8a6; color: #fff; text-align: center; font-weight: bold; border-bottom: 1px solid #fff; }
.hd { background: #0f766e; color: #fff; text-align: center; font-weight: bold; font-size: 10px; border: solid #cfe3e0; border-width: 0 1px 1px 0; }
.kpi s, .hd s { text-decoration-color: #a8474d; }
.title s { text-decoration-color: #b3262e; }
.val, .sub, .n, .c, .pick, .lab { border: solid #d5dce0; border-width: 0 1px 1px 0; }
.val { background: #ecfdf5; border-width: 1px; color: #14202e; font-size: 11px; line-height: 11px; font-weight: bold; text-align: right; padding-right: 1px; }
.sub { background: #ecfdf5; font-weight: bold; text-align: right; }
.pick { background: #fffbeb; border-top-width: 1px; font-weight: bold; padding-left: 1px; line-height: 11px; }
.lab { background: #f8fafc; border-left-width: 1px; font-weight: bold; }
.cut { position: relative; }
.cut::after { content: ""; position: absolute; right: 0; top: 4px; border: 2px solid transparent; border-left: 3px solid #222; border-right: 0; }
.c { border-left-width: 1px; }
.n { text-align: right; }
.n, .c, .hd { line-height: 11px; padding-bottom: 2px; }
.short .n, .short .c { padding-bottom: 1px; }
.alt { background: #f0fdfa; }
.chart { position: absolute; top: 498px; width: 388px; height: 60px; padding-top: 7px; background: #fff; border: 1px solid #ddd; text-align: center; color: #000; font: bold 16px/24px Carlito, Lato, sans-serif; }
.chart-type { left: 22px; }
.chart-bank { left: 636px; }

.vscroll { flex: none; width: 9px; background: #cecece; padding: 1px 2px; }
.vthumb { height: 47%; background: #7f7f7f; border-radius: 3px; }
.hscroll { display: flex; align-items: center; justify-content: space-between; flex: none; height: 9px; margin-right: 9px; padding: 0 1px 0 2px; background: #cecece; }
.hthumb { width: 47%; height: 6px; background: #7f7f7f; border-radius: 3px; }
.grip { width: 1px; height: 6px; background: #333; }

.tabs { display: flex; flex: none; height: 16px; }
.tabnav { display: flex; width: 62px; margin: 1px 7px 0 6px; gap: 1px; }
.tabnav svg { width: 14px; height: 14px; }
.add { width: 16px; }
.add svg { width: 16px; height: 16px; }
.tab { padding: 0 10px; border-right: 1px solid #d5d2cf; }
.tab.active { padding: 0 8px; background: #fff; color: #222; font-weight: bold; border-right: 0; border-bottom: 2px solid #888; }

.sidebar { position: relative; display: flex; flex-direction: column; align-items: center; flex: none; width: 38px; padding-top: 7px; gap: 13px; }
.sidebar svg { width: 16px; height: 16px; }
.sidebar .handle { position: absolute; left: -1px; top: 269px; width: 5px; height: 50px; background: #949494; }
.handle::before { content: ""; display: block; border: 2px solid transparent; border-left-color: #fff; }

.status { display: flex; align-items: center; flex: none; height: 17px; border-top: 1px solid #cfcdcb; }
.status > span { height: 12px; border-right: 1px solid #dedbd8; }
.status .s-save { width: 24px; padding-left: 6px; border: 0; }
.s-save svg { width: 12px; height: 12px; }
.s-sheet { width: 146px; padding-left: 3px; }
.s-sel { width: 212px; padding-left: 6px; }
.s-style { width: 240px; padding-left: 7px; }
.s-lang { width: 159px; text-align: center; }
.s-fill { flex: 1; }
.s-mode { width: 31px; padding-left: 7px; }
.s-mode svg { width: 20px; height: 12px; }
.s-blank { width: 20px; }
.s-avg { width: 174px; text-align: center; }
.s-zoom { display: flex; align-items: center; width: 96px; padding-left: 5px; }
.s-zoom svg { width: 8px; height: 8px; }
.s-zoom input { appearance: none; width: 66px; height: 9px; margin: 0 3px; background: linear-gradient(#999, #999) center / 100% 1px no-repeat; }
.s-zoom input::-webkit-slider-thumb { appearance: none; width: 3px; height: 7px; background: #fff; border: 1px solid #444; }
.status .s-pct { width: 33px; border: 0; text-align: center; }
```
